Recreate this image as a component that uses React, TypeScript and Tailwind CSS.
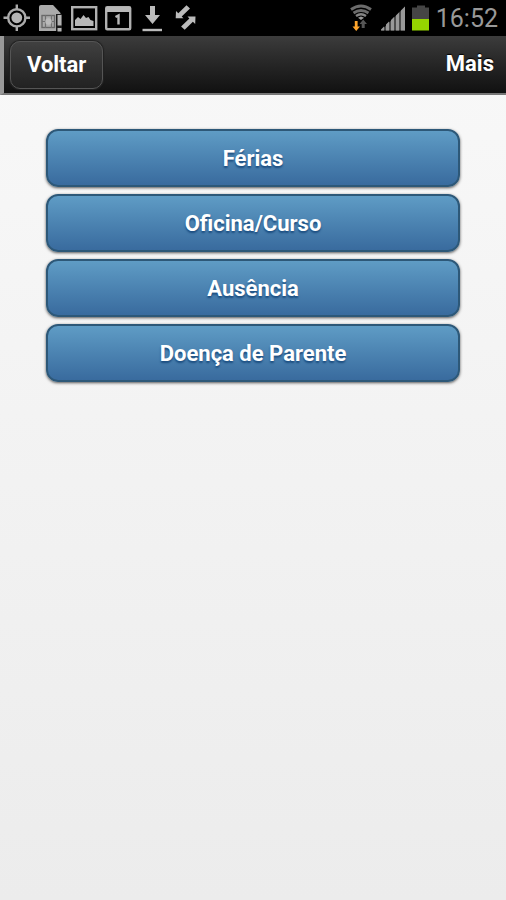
import type { ReactNode } from "react";

const options = ["Férias", "Oficina/Curso", "Ausência", "Doença de Parente"];

function StatusIcon({ children }: { children: ReactNode }) {
  return (
    <svg className="h-7 w-7 shrink-0" viewBox="0 0 28 28" fill="none" aria-hidden="true">
      {children}
    </svg>
  );
}

function StatusBar() {
  return (
    <div className="flex h-9 items-center justify-between bg-black pr-2 pl-[3px]">
      <div className="flex items-center gap-1.5">
        <StatusIcon>
          <circle cx="13.8" cy="13.8" r="8.6" stroke="#aaa" strokeWidth="2.4" />
          <circle cx="13.8" cy="13.8" r="5.4" fill="#b4b4b4" />
          <path d="M13.8 0.5v5M13.8 22v5M0.5 13.8h5M22 13.8h5" stroke="#aaa" strokeWidth="2.4" />
        </StatusIcon>
        <StatusIcon>
          <path d="M4 1h12l7.500 8v18H2V3a2 2 0 0 1 2-2Z" fill="#aaa" />
          <rect x="5" y="11.500" width="12.500" height="12" stroke="#686868" strokeWidth="1.400" />
          <path d="M8.500 11v13M14.500 11v13M5 17.500h3.500M14.500 17.500h3" stroke="#707070" strokeWidth="1.200" />
          <circle cx="11.500" cy="17.500" r="3.200" fill="#bbb" />
          <path d="M19 10h6v17h-6Z" fill="#1c1c1c" />
          <path d="M20.500 11h4v10.500h-4ZM20.500 24h4v3.500h-4Z" fill="#b4b4b4" />
        </StatusIcon>
        <StatusIcon>
          <rect x="1.2" y="3.2" width="24" height="22" stroke="#b0b0b0" strokeWidth="2.4" />
          <path d="M4 22v-6l3-3 2.5 2 3-4 2.5 3 2.5-1 2 3 3 1v5Z" fill="#b8b8b8" />
        </StatusIcon>
        <StatusIcon>
          <rect x="1.2" y="3.2" width="24" height="22" rx="1" stroke="#b0b0b0" strokeWidth="2.4" />
          <path d="M1 3h24.500v5H1Z" fill="#b8b8b8" />
          <path d="m10.500 13 3-1.500v9" stroke="#b8b8b8" strokeWidth="2.400" />
        </StatusIcon>
        <StatusIcon>
          <path d="M11 2h5v9h5l-7.500 9L6 11h5Z" fill="#bbb" />
          <path d="M3.500 26h19.500" stroke="#bbb" strokeWidth="2.400" />
        </StatusIcon>
        <StatusIcon>
          <path d="M2.700 14.300 3 7l2.300 2.200L13.500 1.200l3.500 3.400-8.300 7.900 1.800 1.800Z" fill="#bbb" />
          <path d="m22.500 12.500-.3 7.500-2.300-2.200-8.200 8-3.600-3.400 8.300-7.900-1.900-2Z" fill="#bbb" />
        </StatusIcon>
      </div>

      <div className="flex items-center gap-1.5">
        <svg className="h-7 w-[26px]" viewBox="0 0 26 28" fill="none" aria-hidden="true">
          <path d="M3 5.500q10-7 20 0M5.500 9q7.500-5 15 0" stroke="#6c6c6c" strokeWidth="2.800" />
          <path d="M8 12q5-3.500 10 0" stroke="#858585" strokeWidth="2.400" />
          <path d="m10 13.700 3-1.200 3 1.200-3 2.300Z" fill="#999" />
          <path d="M6.800 17h2.800v5.500H12L8.200 27 4.500 22.500h2.300Z" fill="#ffa52c" />
          <path d="M13.700 24v-4h-2.200l3.700-4.500 3.800 4.500h-2.300v4Z" fill="#555" />
        </svg>
        <svg className="h-7 w-[26px]" viewBox="0 0 26 28" aria-hidden="true">
          <path d="M1 26.500 25 2.500v24Z" fill="#4c4c4c" />
          <path d="M1 26.500v-1l3-3v4ZM6 26.500v-6l3-3v9ZM11 26.500v-10.500l3-3v13.500ZM16 26.500V11.500l3-3v18ZM21 26.500V6.500l4-4v24Z" fill="#999" />
        </svg>
        <svg className="h-7 w-[18px]" viewBox="0 0 18 28" aria-hidden="true">
          <path d="M5 1.500h8v2h4V15H0V3.500h5Z" fill="#454545" />
          <path d="M0 15h17v11.500H0Z" fill="#95d500" />
        </svg>
        <time className="pt-0.5 text-[25px] leading-7 text-[#999]">16:52</time>
      </div>
    </div>
  );
}

export default function App() {
  return (
    <div className="flex min-h-screen flex-col bg-linear-to-b from-[#f9f9f9] to-[#ececec] font-['Roboto','Liberation_Sans',sans-serif]">
      <StatusBar />
      <header className="flex h-[59px] items-center justify-between border-b-2 border-b-[#777] border-l-4 border-l-[#999] bg-linear-to-b from-[#3c3c3c] to-[#111] pr-3 pl-1.5 text-[22px] font-bold text-white [text-shadow:0_-1px_1px_#000]">
        <button
          type="button"
          className="h-12 rounded-[10px] border border-[#555] bg-linear-to-b from-[#404040] to-[#222] px-4 leading-6 shadow-[0_0_1px_1px_#222]"
        >
          Voltar
        </button>
        <h1 className="pb-0.5 leading-6">Mais</h1>
      </header>
      <main className="flex flex-col gap-[7px] px-[46px] pt-[34px]">
        {options.map((label) => (
          <button
            key={label}
            type="button"
            className="h-[58px] rounded-xl border-2 border-[#2d5878] bg-linear-to-b from-[#5f9cc5] to-[#396b9e] pt-0.5 text-[22px] leading-6 font-bold text-white shadow-[0_1px_3px_#555] [text-shadow:0_2px_2px_#194b7e]"
          >
            {label}
          </button>
        ))}
      </main>
    </div>
  );
}
